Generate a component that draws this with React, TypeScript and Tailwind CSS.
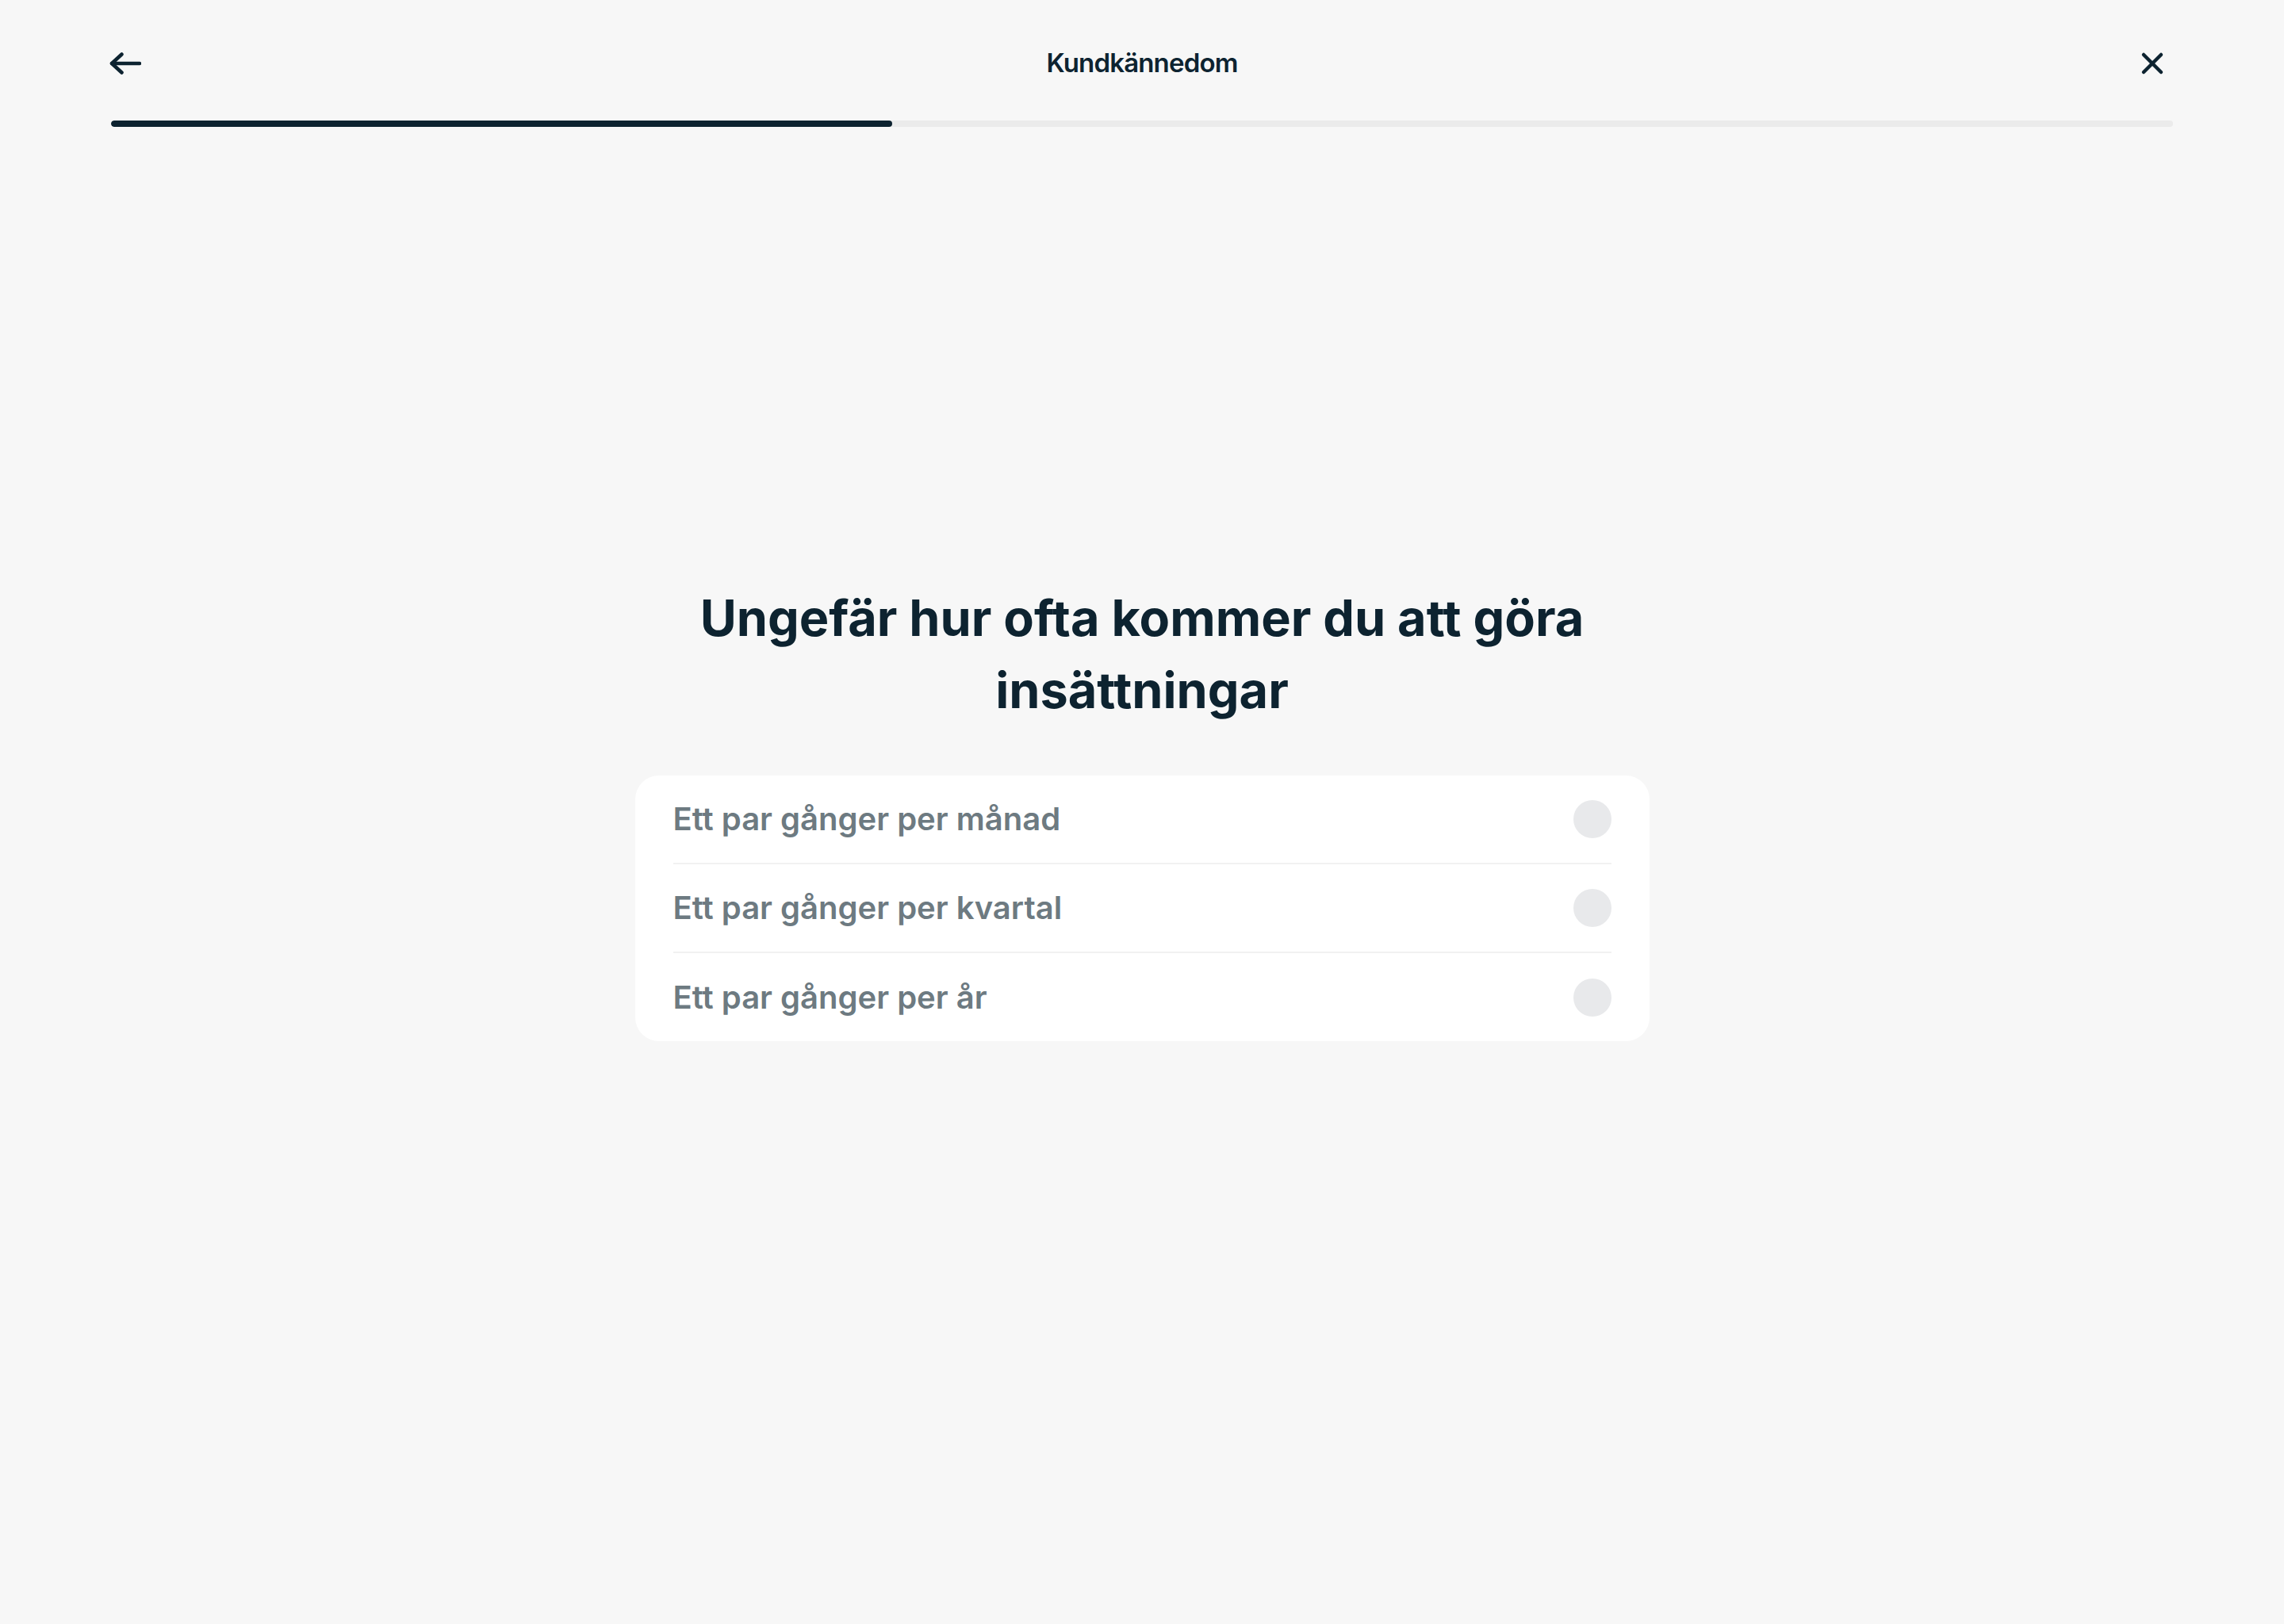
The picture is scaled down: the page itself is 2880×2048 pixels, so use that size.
const options = [
  'Ett par gånger per månad',
  'Ett par gånger per kvartal',
  'Ett par gånger per år',
];

function BackIcon() {
  return (
    <svg width="40" height="28" viewBox="0 0 40 28" fill="none" stroke="#0d2330" strokeWidth="4.5" strokeLinecap="round" strokeLinejoin="round">
      <path d="M38 14H3" />
      <path d="M15.5 2.5L3 14l12.5 11.5" />
    </svg>
  );
}

function CloseIcon() {
  return (
    <svg width="30" height="30" viewBox="0 0 30 30" fill="none" stroke="#0d2330" strokeWidth="4.5" strokeLinecap="round">
      <path d="M4 4l22 22" />
      <path d="M26 4L4 26" />
    </svg>
  );
}

export default function App() {
  const progress = 37.9;

  return (
    <div className="min-h-screen bg-[#f7f7f7] font-['Inter',sans-serif] text-[#0d2330]">
      <header className="pt-[54px]">
        <div className="grid grid-cols-[1fr_auto_1fr] items-center h-[52px] px-[138px]">
          <button type="button" className="justify-self-start">
            <BackIcon />
          </button>
          <h2 className="text-[33px] font-semibold tracking-[-0.025em]">Kundkännedom</h2>
          <button type="button" className="justify-self-end mr-[13px]">
            <CloseIcon />
          </button>
        </div>
        <div className="mx-[140px] mt-[46px] h-[8px] rounded-full bg-[#ebebeb] overflow-hidden">
          <div className="h-full rounded-full bg-[#0d2330]" style={{ width: `${progress}%` }} />
        </div>
      </header>

      <main className="flex flex-col items-center">
        <h1 className="mt-[574px] w-[1200px] text-center text-[63px] leading-[91px] font-bold">
          Ungefär hur ofta kommer du att göra insättningar
        </h1>

        <div className="mt-[62px] w-[1279px] rounded-[30px] bg-white px-[48px]">
          {options.map((opt, i) => (
            <div
              key={opt}
              className={`flex items-center justify-between ${i < options.length - 1 ? 'h-[112px] border-b-2 border-[#f1f1f1]' : 'h-[111px]'}`}
            >
              <span className="text-[40px] font-semibold text-[#6d7a81]">{opt}</span>
              <span className="h-[48px] w-[48px] rounded-full bg-[#e8e9eb]" />
            </div>
          ))}
        </div>
      </main>
    </div>
  );
}
